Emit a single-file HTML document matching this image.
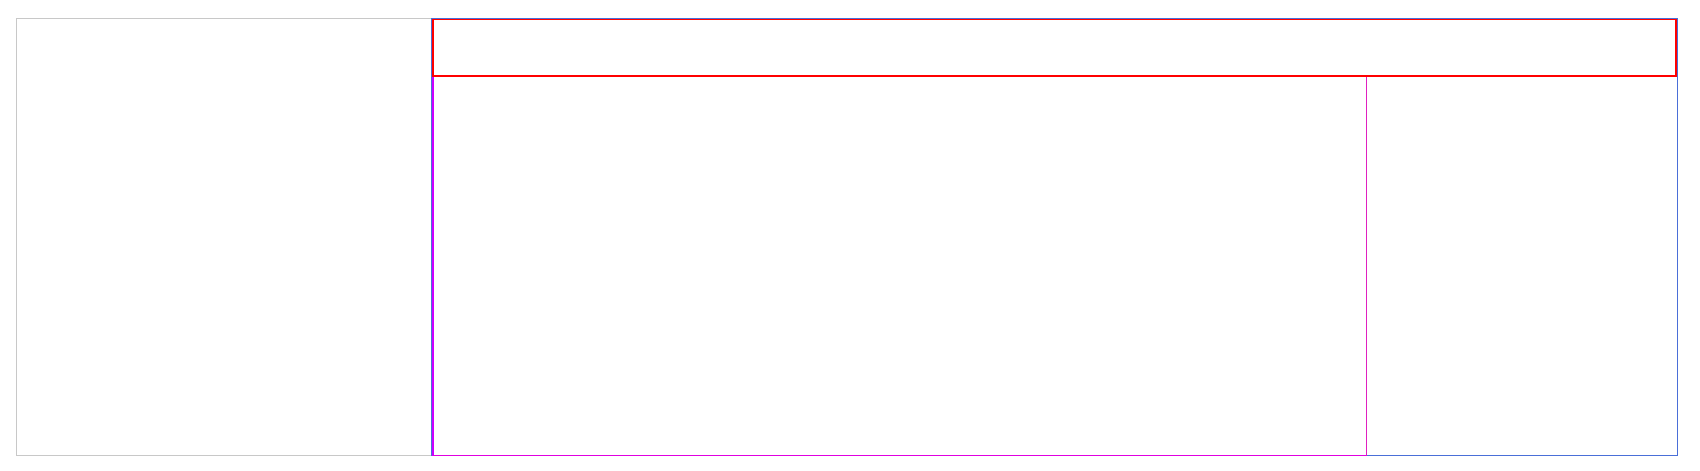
<!DOCTYPE html>
<html><head><style>
html,body{margin:0;padding:0;width:1700px;height:471px;background:#fff;overflow:hidden}
div{position:absolute;box-sizing:border-box}
</style></head><body>
<div style="left:16px;top:18px;width:416px;height:438px;border:1px solid #c8c8c8"></div>
<div style="left:431px;top:18px;width:1247px;height:438px;border:1px solid #4a6fd8"></div>
<div style="left:432px;top:19px;width:1245px;height:58px;border:2px solid #ff0000;border-top-width:1px"></div>
<div style="left:432px;top:77px;width:935px;height:379px;border-left:2px solid #cc00ff;border-right:1px solid #e020c0;border-bottom:1px solid #e000e0"></div>
</body></html>
